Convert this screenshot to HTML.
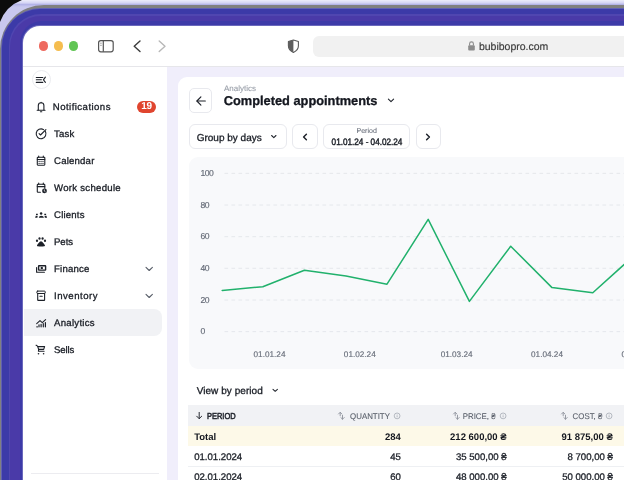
<!DOCTYPE html>
<html><head><meta charset="utf-8">
<style>
*{box-sizing:border-box;margin:0;padding:0}
html,body{width:624px;height:480px;overflow:hidden;background:#fff}
body{position:relative;font-family:"Liberation Sans",sans-serif}
.r{position:absolute}
.t{position:absolute;line-height:1;white-space:nowrap;text-rendering:geometricPrecision}
</style></head><body>
<div id="w" style="position:absolute;left:0;top:0;width:624px;height:480px;overflow:hidden;will-change:transform;background:#fff"><div class="r" style="left:0px;top:0px;width:624px;height:60px;background:linear-gradient(180deg,#ececfa 0,#d4d4f4 3px,#b4b4e8 4.5px,#c8c8ee 7px)"></div>
<div class="r" style="left:0px;top:4.5px;width:700px;height:595.5px;border-top-left-radius:44px;background:#808080"></div>
<div class="r" style="left:1px;top:7.7px;width:699px;height:592.3px;border-top-left-radius:40px;background:#6060b4"></div>
<div class="r" style="left:2px;top:8.7px;width:698px;height:591.3px;border-top-left-radius:38px;background:#3c3aa8"></div>
<div class="r" style="left:9px;top:13.5px;width:691px;height:586.5px;border-top-left-radius:32px;background:#5046b0"></div>
<div class="r" style="left:10px;top:16px;width:690px;height:584px;border-top-left-radius:31px;background:#4a3aa8"></div>
<div class="r" style="left:20px;top:21px;width:680px;height:579px;border-top-left-radius:22px;background:#3d3aa8"></div>
<div class="r" style="left:22px;top:25px;width:678px;height:575px;border-top-left-radius:18px;background:#6a68bc"></div>
<svg class="r" style="left:0;top:0" width="40" height="40"><path d="M0 0 H22 Q6 6 0 22 Z" fill="#0c0c0c"/></svg>
<div class="r" style="left:23px;top:26px;width:677px;height:574px;border-top-left-radius:17px;background:#fff"></div>
<div class="r" style="left:23px;top:66px;width:601px;height:1px;background:#e6e6ea"></div>
<div class="r" style="left:167px;top:67px;width:457px;height:413px;background:#f0eefb"></div>
<div class="r" style="left:177.5px;top:76.7px;width:522.5px;height:523.3px;border-top-left-radius:9px;background:#fff"></div>
<div class="r" style="left:38.5px;top:41.2px;width:9.599999999999994px;height:9.599999999999994px;border-radius:50%;background:#ee6a5f"></div>
<div class="r" style="left:53.5px;top:41.2px;width:9.599999999999994px;height:9.599999999999994px;border-radius:50%;background:#f5bd4f"></div>
<div class="r" style="left:68.5px;top:41.2px;width:9.599999999999994px;height:9.599999999999994px;border-radius:50%;background:#61c554"></div>
<svg class="r" style="left:96px;top:38px" width="20" height="16" viewBox="0 0 20 16"><rect x="2.6" y="2.6" width="14.6" height="11.2" rx="2.2" fill="none" stroke="#555" stroke-width="1.2"/><line x1="7.3" y1="2.6" x2="7.3" y2="13.8" stroke="#555" stroke-width="1.2"/><line x1="4.3" y1="5.2" x2="5.6" y2="5.2" stroke="#777" stroke-width="0.9"/><line x1="4.3" y1="7.3" x2="5.6" y2="7.3" stroke="#777" stroke-width="0.9"/></svg>
<svg class="r" style="left:130px;top:38px" width="14" height="16" viewBox="0 0 14 16"><path d="M10 3 L4.2 8.3 L10 13.6" fill="none" stroke="#3c3c3c" stroke-width="1.4" stroke-linecap="round" stroke-linejoin="round"/></svg>
<svg class="r" style="left:155px;top:38px" width="14" height="16" viewBox="0 0 14 16"><path d="M4.2 3 L10 8.3 L4.2 13.6" fill="none" stroke="#b8b8b8" stroke-width="1.4" stroke-linecap="round" stroke-linejoin="round"/></svg>
<svg class="r" style="left:286px;top:38px" width="14" height="16" viewBox="0 0 14 16"><path d="M7.4 2 L12.4 3.6 V8 C12.4 11 10 13.2 7.4 14.4 C4.8 13.2 2.4 11 2.4 8 V3.6 Z" fill="#fff" stroke="#5a5a5a" stroke-width="1.1" stroke-linejoin="round"/><path d="M7.4 2 L2.4 3.6 V8 C2.4 11 4.8 13.2 7.4 14.4 Z" fill="#5e5e5e"/></svg>
<div class="r" style="left:312.7px;top:35.6px;width:327.3px;height:21.199999999999996px;border-radius:6px;background:#f1f1f1"></div>
<svg class="r" style="left:467px;top:40px" width="9" height="12" viewBox="0 0 9 12"><path d="M2.6 5.6 V3.8 a1.9 1.9 0 0 1 3.8 0 V5.6" fill="none" stroke="#8c8c8c" stroke-width="1.1"/><rect x="1.2" y="5.2" width="6.6" height="5.4" rx="1" fill="#8c8c8c"/></svg>
<div class="t" style="left:478.90px;top:41.91px;font-size:10.5px;color:#3b3b3b;font-weight:400;letter-spacing:0px;-webkit-text-stroke:0.15px #3b3b3b">bubibopro.com</div>
<div class="r" style="left:31.6px;top:70.2px;width:19.0px;height:19.0px;border-radius:50%;border:1px solid #ebecf0;background:#fff"></div>
<svg class="r" style="left:31px;top:70px" width="20" height="20" viewBox="0 0 20 20"><g stroke="#1d2129" stroke-width="1.1" stroke-linecap="round" fill="none"><line x1="5.3" y1="7.5" x2="11.8" y2="7.5"/><line x1="5.3" y1="9.8" x2="10.4" y2="9.8"/><line x1="5.3" y1="12.4" x2="11.8" y2="12.4"/><path d="M14.4 7.2 L12.4 9.8 L14.4 12.3"/></g></svg>
<div class="r" style="left:24px;top:309px;width:138px;height:27px;border-radius:0 8px 8px 0;background:#f1f2f5"></div>
<div class="t" style="left:52.80px;top:102.57px;font-size:9.6px;color:#181c24;font-weight:400;letter-spacing:0.45px;-webkit-text-stroke:0.3px #181c24">Notifications</div>
<div class="t" style="left:54.00px;top:129.57px;font-size:9.6px;color:#181c24;font-weight:400;letter-spacing:0.2px;-webkit-text-stroke:0.3px #181c24">Task</div>
<div class="t" style="left:54.00px;top:156.57px;font-size:9.6px;color:#181c24;font-weight:400;letter-spacing:0.2px;-webkit-text-stroke:0.3px #181c24">Calendar</div>
<div class="t" style="left:54.00px;top:183.57px;font-size:9.6px;color:#181c24;font-weight:400;letter-spacing:0.28px;-webkit-text-stroke:0.3px #181c24">Work schedule</div>
<div class="t" style="left:54.00px;top:210.57px;font-size:9.6px;color:#181c24;font-weight:400;letter-spacing:0.2px;-webkit-text-stroke:0.3px #181c24">Clients</div>
<div class="t" style="left:54.00px;top:237.57px;font-size:9.6px;color:#181c24;font-weight:400;letter-spacing:-0.05px;-webkit-text-stroke:0.3px #181c24">Pets</div>
<div class="t" style="left:54.00px;top:264.57px;font-size:9.6px;color:#181c24;font-weight:400;letter-spacing:0.2px;-webkit-text-stroke:0.3px #181c24">Finance</div>
<div class="t" style="left:54.00px;top:291.57px;font-size:9.6px;color:#181c24;font-weight:400;letter-spacing:0.5px;-webkit-text-stroke:0.3px #181c24">Inventory</div>
<div class="t" style="left:54.00px;top:318.57px;font-size:9.6px;color:#181c24;font-weight:400;letter-spacing:0.28px;-webkit-text-stroke:0.3px #181c24">Analytics</div>
<div class="t" style="left:54.00px;top:345.57px;font-size:9.6px;color:#181c24;font-weight:400;letter-spacing:-0.15px;-webkit-text-stroke:0.3px #181c24">Sells</div>
<div class="r" style="left:136.6px;top:101px;width:19.700000000000017px;height:12px;border-radius:6px;background:#e0452f"></div>
<div class="t" style="left:-53.50px;width:400px;text-align:center;top:102.33px;font-size:10px;color:#fff;font-weight:700;letter-spacing:-0.2px;">19</div>
<svg class="r" style="left:144px;top:264.1px" width="10" height="10" viewBox="0 0 10 10"><path d="M2 3.4 L5.2 6.5 L8.4 3.4" fill="none" stroke="#555b66" stroke-width="1.05" stroke-linecap="round" stroke-linejoin="round"/></svg>
<svg class="r" style="left:144px;top:291.1px" width="10" height="10" viewBox="0 0 10 10"><path d="M2 3.4 L5.2 6.5 L8.4 3.4" fill="none" stroke="#555b66" stroke-width="1.05" stroke-linecap="round" stroke-linejoin="round"/></svg>
<div class="r" style="left:31px;top:473px;width:128px;height:1px;background:#ececf0"></div>
<svg class="r" style="left:0;top:0" width="170" height="480" viewBox="0 0 170 480"><g fill="none" stroke="#1d2129" stroke-width="1.1" stroke-linecap="round" stroke-linejoin="round">
<path d="M38.3 110 V105.6 a2.8 2.9 0 0 1 5.6 0 V110"/><path d="M37.2 110.2 H45"/><path d="M40.4 111.7 H41.8"/><path d="M41.1 102.4 V102.8"/>
<path d="M45.3 131.3 A4.9 4.9 0 1 1 43.6 129.6"/><path d="M39.1 133.6 L40.5 135 L45.9 129.7"/>
<rect x="37.3" y="157.2" width="7.5" height="8" rx="0.6"/><path d="M37.3 159.5 H44.8"/><path d="M38.7 156.1 V157.2 M43.3 156.1 V157.2"/>
<path d="M44.8 188.2 V184.8 a0.6 0.6 0 0 0 -0.6 -0.6 H37.9 a0.6 0.6 0 0 0 -0.6 0.6 V191.7 a0.6 0.6 0 0 0 0.6 0.6 H40.4"/><path d="M37.3 186.6 H44.8"/><path d="M38.7 183.1 V184.2 M43.3 183.1 V184.2"/>
<path d="M39 265.8 H45.2 a0.4 0.4 0 0 1 0.4 0.4 V269.7 a0.4 0.4 0 0 1 -0.4 0.4 H39 a0.4 0.4 0 0 1 -0.4 -0.4 V266.2 a0.4 0.4 0 0 1 0.4 -0.4 Z" stroke-width="1.4"/><path d="M36.6 267.6 V272.2 H44.4" stroke-width="1.15"/>
<rect x="36.8" y="291.1" width="8.5" height="2.4" rx="0.9" stroke-width="1.0"/><path d="M37.7 293.4 V299.9 a0.5 0.5 0 0 0 0.5 0.5 H44.1 a0.5 0.5 0 0 0 0.5 -0.5 V293.4"/><path d="M39.9 296.3 H42.2"/>
<path d="M36.7 323.7 L40 320.6 L42.3 322.6 L45.6 319.6"/><path d="M36.8 326.8 H37.4 M39 324.8 V326.8 M41.1 324.4 V326.8 M43.3 323.7 V326.8 M45.4 322.6 V326.8" stroke-width="1.2"/>
<path d="M36.1 345.2 L37.6 346.1 L38.7 349.6 L38.4 351.2 H44.1"/><path d="M37.9 346.6 H44.6 L43.7 349.4 H38.7"/>
</g>
<g fill="#1d2129">
<circle cx="39.1" cy="161.4" r="0.6"/><circle cx="41.05" cy="161.4" r="0.6"/><circle cx="43" cy="161.4" r="0.6"/><circle cx="39.1" cy="163.4" r="0.6"/><circle cx="41.05" cy="163.4" r="0.6"/><circle cx="43" cy="163.4" r="0.6"/>
<rect x="40.7" y="266.9" width="2.2" height="2.1" rx="0.6"/>
<circle cx="44.5" cy="190.9" r="2.4"/>
<circle cx="38.5" cy="353.7" r="0.8"/><circle cx="43.6" cy="353.7" r="0.8"/>
<ellipse cx="37.0" cy="240.8" rx="1.1" ry="1.2"/><ellipse cx="39.5" cy="238.6" rx="1.1" ry="1.25"/><ellipse cx="42.6" cy="238.6" rx="1.1" ry="1.25"/><ellipse cx="45.0" cy="240.8" rx="1.1" ry="1.2"/>
<path d="M41 241.2 C42.2 241.2 45.2 244.8 45 245.8 C44.8 246.6 43.4 246.4 41 246.4 C38.6 246.4 37.2 246.6 37 245.8 C36.8 244.8 39.8 241.2 41 241.2 Z"/>
<circle cx="41.1" cy="213.5" r="1.25"/><path d="M38.8 217.8 C38.9 216.4 39.9 215.7 41.3 215.7 C42.7 215.7 43.8 216.4 43.9 217.8 Z"/>
<path d="M36 213.8 H37.8 V214.9 H36 Z M44.3 213.8 H46.1 V214.9 H44.3 Z"/><path d="M35.1 217.8 L35.8 215.8 L37.7 215.8 L37.4 217.8 Z M47.1 217.8 L46.4 215.8 L44.5 215.8 L44.8 217.8 Z"/>
</g>
<path d="M44.3 189.8 V191.1 L45.2 191.7" fill="none" stroke="#fff" stroke-width="0.7" stroke-linecap="round"/>
</svg>
<div class="r" style="left:189.2px;top:88.3px;width:23.30000000000001px;height:24.400000000000006px;border-radius:5px;border:1px solid #e8e9ee;background:#fff"></div>
<svg class="r" style="left:193px;top:93px" width="16" height="16" viewBox="0 0 16 16"><g fill="none" stroke="#1d2129" stroke-width="1.15" stroke-linecap="round" stroke-linejoin="round"><path d="M12.3 8 H4"/><path d="M7.9 3.9 L3.9 8 L7.9 12.1"/></g></svg>
<div class="t" style="left:224.00px;top:85.43px;font-size:8px;color:#989ea8;font-weight:400;letter-spacing:0px;-webkit-text-stroke:0.1px #989ea8">Analytics</div>
<div class="t" style="left:223.80px;top:95.26px;font-size:12.8px;color:#14171f;font-weight:700;letter-spacing:0px;-webkit-text-stroke:0.3px #14171f">Completed appointments</div>
<svg class="r" style="left:386px;top:95px" width="10" height="10" viewBox="0 0 10 10"><path d="M2.4 4.2 L5 6.6 L7.6 4.2" fill="none" stroke="#1d2129" stroke-width="1.1" stroke-linecap="round" stroke-linejoin="round"/></svg>
<div class="r" style="left:189px;top:124.3px;width:97.60000000000002px;height:24.700000000000003px;border-radius:6px;border:1px solid #e8e9ee;background:#fff"></div>
<div class="t" style="left:196.70px;top:134.03px;font-size:10px;color:#181c24;font-weight:400;letter-spacing:0px;-webkit-text-stroke:0.3px #181c24">Group by days</div>
<svg class="r" style="left:269px;top:132px" width="10" height="10" viewBox="0 0 10 10"><path d="M2.6 3.5 L4.8 5.6 L7 3.5" fill="none" stroke="#1d2129" stroke-width="1.05" stroke-linecap="round" stroke-linejoin="round"/></svg>
<div class="r" style="left:292.3px;top:124.3px;width:25.30000000000001px;height:24.700000000000003px;border-radius:6px;border:1px solid #e8e9ee;background:#fff"></div>
<svg class="r" style="left:300px;top:131px" width="10" height="12" viewBox="0 0 10 12"><path d="M6.4 3.3 L3.6 6 L6.4 8.7" fill="none" stroke="#1d2129" stroke-width="1.45" stroke-linecap="round" stroke-linejoin="round"/></svg>
<div class="r" style="left:323.2px;top:124.3px;width:87.10000000000002px;height:24.89999999999999px;border-radius:6px;border:1px solid #e8e9ee;background:#fff"></div>
<div class="t" style="left:166.70px;width:400px;text-align:center;top:128.27px;font-size:7px;color:#6a707c;font-weight:400;letter-spacing:0px;-webkit-text-stroke:0.1px #6a707c">Period</div>
<div class="t" style="left:166.50px;width:400px;text-align:center;top:137.04px;font-size:9.4px;color:#1d2129;font-weight:400;letter-spacing:0px;-webkit-text-stroke:0.45px #1d2129;transform:scaleX(.87)">01.01.24 - 04.02.24</div>
<div class="r" style="left:416.3px;top:124.3px;width:24.30000000000001px;height:24.89999999999999px;border-radius:6px;border:1px solid #e8e9ee;background:#fff"></div>
<svg class="r" style="left:423px;top:131px" width="10" height="12" viewBox="0 0 10 12"><path d="M3.6 3.3 L6.4 6 L3.6 8.7" fill="none" stroke="#1d2129" stroke-width="1.45" stroke-linecap="round" stroke-linejoin="round"/></svg>
<div class="r" style="left:189.2px;top:156.9px;width:510.8px;height:212.4px;border-radius:9px;background:#f8f9fb"></div>
<svg class="r" style="left:0;top:0" width="624" height="480"><g stroke="#e3e5ea" stroke-width="0.9" stroke-dasharray="3.6 3.4"><line x1="224.5" y1="173.4" x2="624" y2="173.4"/><line x1="224.5" y1="205.0" x2="624" y2="205.0"/><line x1="224.5" y1="236.7" x2="624" y2="236.7"/><line x1="224.5" y1="268.3" x2="624" y2="268.3"/><line x1="224.5" y1="300.0" x2="624" y2="300.0"/><line x1="224.5" y1="331.6" x2="624" y2="331.6"/></g></svg>
<div class="t" style="left:200.40px;top:169.02px;font-size:8.6px;color:#656b77;font-weight:400;letter-spacing:-0.45px;-webkit-text-stroke:0.15px #656b77">100</div>
<div class="t" style="left:200.40px;top:200.62px;font-size:8.6px;color:#656b77;font-weight:400;letter-spacing:-0.45px;-webkit-text-stroke:0.15px #656b77">80</div>
<div class="t" style="left:200.40px;top:232.32px;font-size:8.6px;color:#656b77;font-weight:400;letter-spacing:-0.45px;-webkit-text-stroke:0.15px #656b77">60</div>
<div class="t" style="left:200.40px;top:263.92px;font-size:8.6px;color:#656b77;font-weight:400;letter-spacing:-0.45px;-webkit-text-stroke:0.15px #656b77">40</div>
<div class="t" style="left:200.40px;top:295.62px;font-size:8.6px;color:#656b77;font-weight:400;letter-spacing:-0.45px;-webkit-text-stroke:0.15px #656b77">20</div>
<div class="t" style="left:200.40px;top:327.22px;font-size:8.6px;color:#656b77;font-weight:400;letter-spacing:-0.45px;-webkit-text-stroke:0.15px #656b77">0</div>
<div class="t" style="left:69.50px;width:400px;text-align:center;top:350.86px;font-size:8.2px;color:#686e7a;font-weight:400;letter-spacing:0px;-webkit-text-stroke:0.15px #686e7a">01.01.24</div>
<div class="t" style="left:159.80px;width:400px;text-align:center;top:350.86px;font-size:8.2px;color:#686e7a;font-weight:400;letter-spacing:0px;-webkit-text-stroke:0.15px #686e7a">01.02.24</div>
<div class="t" style="left:256.60px;width:400px;text-align:center;top:350.86px;font-size:8.2px;color:#686e7a;font-weight:400;letter-spacing:0px;-webkit-text-stroke:0.15px #686e7a">01.03.24</div>
<div class="t" style="left:347.00px;width:400px;text-align:center;top:350.86px;font-size:8.2px;color:#686e7a;font-weight:400;letter-spacing:0px;-webkit-text-stroke:0.15px #686e7a">01.04.24</div>
<div class="t" style="left:437.50px;width:400px;text-align:center;top:350.86px;font-size:8.2px;color:#686e7a;font-weight:400;letter-spacing:0px;-webkit-text-stroke:0.15px #686e7a">01.05.24</div>
<svg class="r" style="left:0;top:0" width="624" height="480"><path d="M222.2 290.4 L262.8 286.7 L304.4 270.2 L346.0 276.0 L387.0 284.2 L428.2 219.4 L469.4 301.4 L510.7 246.2 L552.0 287.6 L592.8 292.8 L634 255.6" fill="none" stroke="#21b16c" stroke-width="1.5" stroke-linejoin="round" stroke-linecap="round"/></svg>
<div class="t" style="left:196.70px;top:387.14px;font-size:10px;color:#181c24;font-weight:400;letter-spacing:0.05px;-webkit-text-stroke:0.3px #181c24">View by period</div>
<svg class="r" style="left:270px;top:385px" width="10" height="10" viewBox="0 0 10 10"><path d="M3 4.4 L5.2 6.3 L7.4 4.4" fill="none" stroke="#1d2129" stroke-width="1.05" stroke-linecap="round" stroke-linejoin="round"/></svg>
<div class="r" style="left:188.3px;top:405.3px;width:511.7px;height:20.899999999999977px;background:#f1f2f5"></div>
<div class="r" style="left:188.3px;top:426.2px;width:511.7px;height:19.80000000000001px;background:#fdf9e8"></div>
<div class="r" style="left:188.3px;top:465.8px;width:511.7px;height:1.0px;background:#eef0f3"></div>
<svg class="r" style="left:194px;top:410px" width="10" height="10" viewBox="0 0 10 10"><g fill="none" stroke="#1d2129" stroke-width="0.95" stroke-linecap="round" stroke-linejoin="round"><path d="M5.2 2.4 V8.6"/><path d="M2.7 6.2 L5.2 8.7 L7.7 6.2"/></g></svg>
<div class="t" style="left:207.20px;top:412.44px;font-size:8.7px;color:#1d2129;font-weight:400;letter-spacing:0px;-webkit-text-stroke:0.5px #1d2129;transform:scaleX(.86);transform-origin:0 0">PERIOD</div>
<div class="t" style="right:234.40px;top:411.87px;font-size:8.3px;color:#585e69;font-weight:400;letter-spacing:0px;-webkit-text-stroke:0.1px #585e69;transform:scaleX(0.95);transform-origin:100% 0">QUANTITY</div>
<svg class="r" style="left:336px;top:410px" width="10" height="10" viewBox="0 0 10 10"><g fill="none" stroke="#8d929c" stroke-width="0.9" stroke-linecap="round" stroke-linejoin="round"><path d="M4.2 2.5 V5.7 M2.5 4 L4.2 2.3 L5.9 4"/><path d="M6.5 5.3 V9.2 M4.8 7.5 L6.5 9.2 L8.2 7.5"/></g></svg>
<svg class="r" style="left:392px;top:410px" width="10" height="10" viewBox="0 0 10 10"><circle cx="5.1" cy="5.9" r="2.9" fill="none" stroke="#a6abb4" stroke-width="0.8"/><path d="M5.1 5.3 V7.3" stroke="#a6abb4" stroke-width="0.8"/><circle cx="5.1" cy="4.3" r="0.4" fill="#a6abb4"/></svg>
<div class="t" style="right:128.20px;top:411.87px;font-size:8.3px;color:#585e69;font-weight:400;letter-spacing:0px;-webkit-text-stroke:0.1px #585e69;transform:scaleX(0.95);transform-origin:100% 0">PRICE, ₴</div>
<svg class="r" style="left:450.7px;top:410px" width="10" height="10" viewBox="0 0 10 10"><g fill="none" stroke="#8d929c" stroke-width="0.9" stroke-linecap="round" stroke-linejoin="round"><path d="M4.2 2.5 V5.7 M2.5 4 L4.2 2.3 L5.9 4"/><path d="M6.5 5.3 V9.2 M4.8 7.5 L6.5 9.2 L8.2 7.5"/></g></svg>
<svg class="r" style="left:498.4px;top:410px" width="10" height="10" viewBox="0 0 10 10"><circle cx="5.1" cy="5.9" r="2.9" fill="none" stroke="#a6abb4" stroke-width="0.8"/><path d="M5.1 5.3 V7.3" stroke="#a6abb4" stroke-width="0.8"/><circle cx="5.1" cy="4.3" r="0.4" fill="#a6abb4"/></svg>
<div class="t" style="right:21.80px;top:411.87px;font-size:8.3px;color:#585e69;font-weight:400;letter-spacing:0px;-webkit-text-stroke:0.1px #585e69;transform:scaleX(0.95);transform-origin:100% 0">COST, ₴</div>
<svg class="r" style="left:559.1px;top:410px" width="10" height="10" viewBox="0 0 10 10"><g fill="none" stroke="#8d929c" stroke-width="0.9" stroke-linecap="round" stroke-linejoin="round"><path d="M4.2 2.5 V5.7 M2.5 4 L4.2 2.3 L5.9 4"/><path d="M6.5 5.3 V9.2 M4.8 7.5 L6.5 9.2 L8.2 7.5"/></g></svg>
<svg class="r" style="left:604px;top:410px" width="10" height="10" viewBox="0 0 10 10"><circle cx="5.1" cy="5.9" r="2.9" fill="none" stroke="#a6abb4" stroke-width="0.8"/><path d="M5.1 5.3 V7.3" stroke="#a6abb4" stroke-width="0.8"/><circle cx="5.1" cy="4.3" r="0.4" fill="#a6abb4"/></svg>
<div class="t" style="left:194.20px;top:432.56px;font-size:9.5px;color:#14171f;font-weight:700;letter-spacing:0px;">Total</div>
<div class="t" style="right:223.20px;top:432.56px;font-size:9.5px;color:#14171f;font-weight:700;letter-spacing:0px;">284</div>
<div class="t" style="right:117.40px;top:432.56px;font-size:9.5px;color:#14171f;font-weight:700;letter-spacing:0px;">212 600,00 ₴</div>
<div class="t" style="right:11.20px;top:432.56px;font-size:9.5px;color:#14171f;font-weight:700;letter-spacing:0px;">91 875,00 ₴</div>
<div class="t" style="left:194.20px;top:453.17px;font-size:9.6px;color:#1d2129;font-weight:400;letter-spacing:0px;-webkit-text-stroke:0.3px #1d2129">01.01.2024</div>
<div class="t" style="right:223.20px;top:453.17px;font-size:9.6px;color:#1d2129;font-weight:400;letter-spacing:0px;-webkit-text-stroke:0.3px #1d2129">45</div>
<div class="t" style="right:117.40px;top:453.17px;font-size:9.6px;color:#1d2129;font-weight:400;letter-spacing:0px;-webkit-text-stroke:0.3px #1d2129">35 500,00 ₴</div>
<div class="t" style="right:11.20px;top:453.17px;font-size:9.6px;color:#1d2129;font-weight:400;letter-spacing:0px;-webkit-text-stroke:0.3px #1d2129">8 700,00 ₴</div>
<div class="t" style="left:194.20px;top:472.97px;font-size:9.6px;color:#1d2129;font-weight:400;letter-spacing:0px;-webkit-text-stroke:0.3px #1d2129">02.01.2024</div>
<div class="t" style="right:223.20px;top:472.97px;font-size:9.6px;color:#1d2129;font-weight:400;letter-spacing:0px;-webkit-text-stroke:0.3px #1d2129">60</div>
<div class="t" style="right:117.40px;top:472.97px;font-size:9.6px;color:#1d2129;font-weight:400;letter-spacing:0px;-webkit-text-stroke:0.3px #1d2129">48 000,00 ₴</div>
<div class="t" style="right:11.20px;top:472.97px;font-size:9.6px;color:#1d2129;font-weight:400;letter-spacing:0px;-webkit-text-stroke:0.3px #1d2129">50 000,00 ₴</div>
</div></body></html>
